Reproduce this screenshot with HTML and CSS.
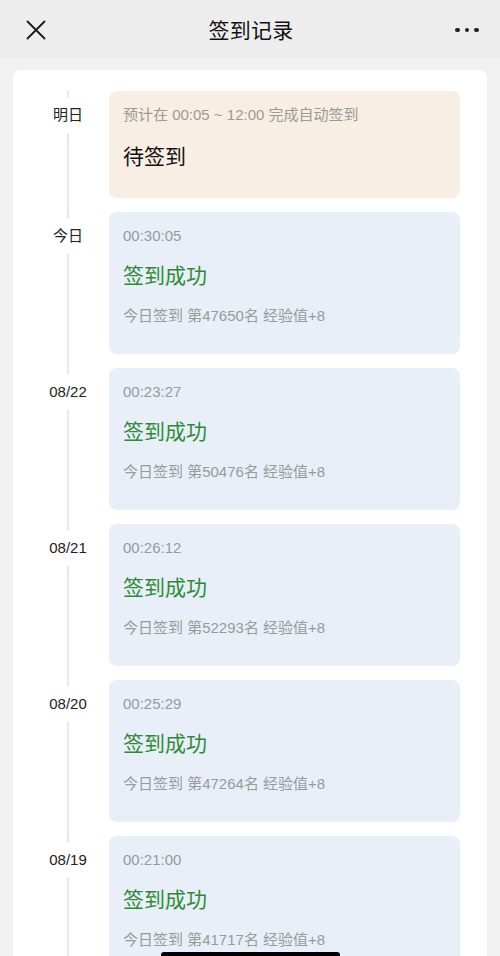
FILE: index.html
```html
<!DOCTYPE html>
<html lang="zh">
<head>
<meta charset="utf-8">
<title>签到记录</title>
<link rel="stylesheet" href="styles.css">
</head>
<body>
<header class="nav">
  <button class="nav-btn close" aria-label="关闭">
    <svg width="20" height="20" viewBox="0 0 20 20"><path d="M1.5 1.5 L18.5 18.5 M18.5 1.5 L1.5 18.5" stroke="#1a1a1a" stroke-width="1.8" stroke-linecap="round" fill="none"/></svg>
  </button>
  <h1 class="nav-title">签到记录</h1>
  <button class="nav-btn more" aria-label="更多">
    <span class="dot"></span><span class="dot"></span><span class="dot"></span>
  </button>
</header>

<main class="panel">
  <div class="row">
    <div class="axis first"><span class="day">明日</span></div>
    <div class="card pending">
      <div class="meta">预计在 00:05 ~ 12:00 完成自动签到</div>
      <div class="status">待签到</div>
    </div>
  </div>
  <div class="row">
    <div class="axis"><span class="day">今日</span></div>
    <div class="card done">
      <div class="meta">00:30:05</div>
      <div class="status ok">签到成功</div>
      <div class="meta">今日签到 第47650名 经验值+8</div>
    </div>
  </div>
  <div class="row">
    <div class="axis"><span class="day">08/22</span></div>
    <div class="card done">
      <div class="meta">00:23:27</div>
      <div class="status ok">签到成功</div>
      <div class="meta">今日签到 第50476名 经验值+8</div>
    </div>
  </div>
  <div class="row">
    <div class="axis"><span class="day">08/21</span></div>
    <div class="card done">
      <div class="meta">00:26:12</div>
      <div class="status ok">签到成功</div>
      <div class="meta">今日签到 第52293名 经验值+8</div>
    </div>
  </div>
  <div class="row">
    <div class="axis"><span class="day">08/20</span></div>
    <div class="card done">
      <div class="meta">00:25:29</div>
      <div class="status ok">签到成功</div>
      <div class="meta">今日签到 第47264名 经验值+8</div>
    </div>
  </div>
  <div class="row">
    <div class="axis"><span class="day">08/19</span></div>
    <div class="card done">
      <div class="meta">00:21:00</div>
      <div class="status ok">签到成功</div>
      <div class="meta">今日签到 第41717名 经验值+8</div>
    </div>
  </div>
</main>
<div class="home-indicator"></div>
</body>
</html>
```

FILE: styles.css
```css
* { box-sizing: border-box; }
html, body {
  margin: 0;
  padding: 0;
  height: 956px;
  overflow: hidden;
}
body {
  background: #f1f1f1;
  font-family: "Liberation Sans", "Noto Sans CJK SC", sans-serif;
  color: #222;
}
.nav {
  height: 58px;
  background: #ededed;
  display: flex;
  align-items: center;
  justify-content: space-between;
  padding: 0 22px 0 26px;
}
.nav-btn {
  border: 0;
  background: none;
  padding: 0;
  display: flex;
  align-items: center;
  gap: 5px;
}
.close { width: 20px; height: 20px; margin-top: 1px; }
.more { width: 22px; justify-content: center; margin-top: 2px; }
.dot {
  width: 4.5px;
  height: 4.5px;
  border-radius: 50%;
  background: #222;
  flex: none;
}
.nav-title {
  margin: 0;
  font-size: 21px;
  font-weight: 400;
  color: #111;
  letter-spacing: 0.3px;
}
.panel {
  margin: 12px 13px 0;
  background: #fff;
  border-radius: 8px;
  padding: 21px 27px 0 14px;
}
.row {
  display: grid;
  grid-template-columns: 82px 1fr;
}
.axis {
  position: relative;
  display: flex;
  justify-content: center;
  align-items: flex-start;
}
.axis::before {
  content: "";
  position: absolute;
  left: 40px;
  top: 0;
  bottom: 0;
  width: 2px;
  background: #e2e9f1;
}
.day {
  position: relative;
  margin-top: 6px;
  padding: 8px 0;
  line-height: 20px;
  font-size: 15px;
  color: #222;
  background: #fff;
}
.card {
  border-radius: 8px;
  padding: 14px 14px 27px;
  margin-bottom: 14px;
}
.pending { background: #f8eee3; }
.done { background: #e8eff8; padding-bottom: 28px; }
.meta {
  font-size: 15px;
  line-height: 20px;
  color: #9a9a9a;
}
.status {
  font-size: 21px;
  line-height: 28px;
  margin: 18px 0 0;
  color: #111;
}
.status.ok {
  color: #2f8a38;
  margin: 16px 0 16px;
}
.home-indicator {
  position: fixed;
  left: 161px;
  width: 179px;
  bottom: -2px;
  height: 6px;
  border-radius: 3px;
  background: #000;
}
```
